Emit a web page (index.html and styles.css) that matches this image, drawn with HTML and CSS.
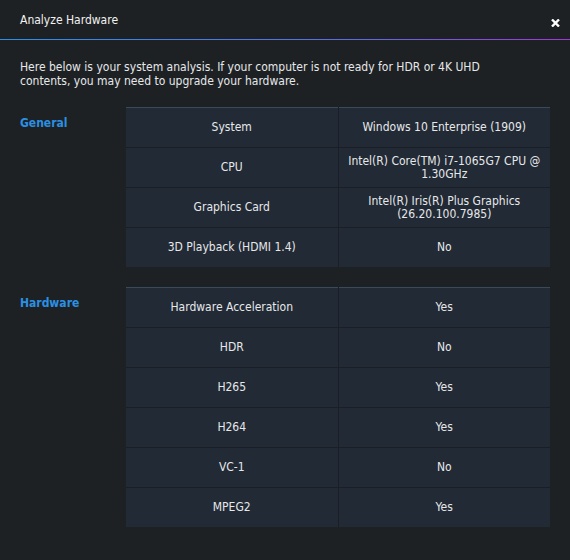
FILE: index.html
```html
<!DOCTYPE html>
<html lang="en">
<head>
    <meta charset="UTF-8">
    <title>Analyze Hardware</title>
    <link rel="stylesheet" href="styles.css">
</head>
<body>
    <div class="dialog">
        <div class="dialog-header">
            <span class="dialog-title">Analyze Hardware</span>
            <button class="close-btn" aria-label="Close">
                <svg width="9" height="8" viewBox="0 0 9 8">
                    <path d="M1 0.5 L8 7.5 M8 0.5 L1 7.5" stroke="#fff" stroke-width="2.4"/>
                </svg>
            </button>
        </div>

        <div class="dialog-body">
            <p class="intro">Here below is your system analysis. If your computer is not ready for HDR or 4K UHD contents, you may need to upgrade your hardware.</p>

            <div class="section">
                <h3 class="section-label">General</h3>
                <table class="info-table">
                    <tr><td>System</td><td>Windows 10 Enterprise (1909)</td></tr>
                    <tr><td>CPU</td><td>Intel(R) Core(TM) i7-1065G7 CPU @ 1.30GHz</td></tr>
                    <tr><td>Graphics Card</td><td>Intel(R) Iris(R) Plus Graphics<br>(26.20.100.7985)</td></tr>
                    <tr><td>3D Playback (HDMI 1.4)</td><td>No</td></tr>
                </table>
            </div>

            <div class="section">
                <h3 class="section-label">Hardware</h3>
                <table class="info-table">
                    <tr><td>Hardware Acceleration</td><td>Yes</td></tr>
                    <tr><td>HDR</td><td>No</td></tr>
                    <tr><td>H265</td><td>Yes</td></tr>
                    <tr><td>H264</td><td>Yes</td></tr>
                    <tr><td>VC-1</td><td>No</td></tr>
                    <tr><td>MPEG2</td><td>Yes</td></tr>
                </table>
            </div>
        </div>
    </div>
</body>
</html>
```

FILE: styles.css
```css
html, body {
    margin: 0;
    height: 100%;
    background: #1e2124;
}
body {
    font-family: "DejaVu Sans Condensed", "DejaVu Sans", Verdana, sans-serif;
    font-size: 12px;
    color: #e6e8ea;
}
.dialog-header {
    height: 39px;
    padding: 0 10px 0 20px;
    display: flex;
    align-items: center;
    justify-content: space-between;
    border-bottom: 1px solid transparent;
    border-image: linear-gradient(to right, #2f8fe6, #5a6ee0 60%, #a238d8) 1;
}
.dialog-title {
    color: #f2f2f2;
    padding-top: 1px;
}
.close-btn {
    background: none;
    border: none;
    padding: 0;
    margin-top: 7px;
    line-height: 0;
    cursor: pointer;
}
.dialog-body {
    padding: 21px 20px 0 20px;
}
.intro {
    margin: 0 0 19px 0;
    padding-right: 24px;
    line-height: 13.5px;
}
.section {
    display: flex;
    margin-bottom: 20px;
}
.section-label {
    width: 106px;
    flex: none;
    margin: 9px 0 0 0;
    font-size: 12px;
    font-weight: bold;
    color: #2a90e2;
}
.info-table {
    width: 424px;
    border-collapse: collapse;
    table-layout: fixed;
    border-top: 1px solid #3a4a5d;
}
.info-table td {
    width: 50%;
    height: 39px;
    padding: 0;
    text-align: center;
    vertical-align: middle;
    background: #222a35;
    border: 1px solid #1b1f25;
    border-top: none;
    line-height: 13px;
}
.info-table tr:last-child td {
    border-bottom: none;
}
.info-table td:first-child {
    border-left: none;
}
.info-table td:last-child {
    border-right: none;
}
```
